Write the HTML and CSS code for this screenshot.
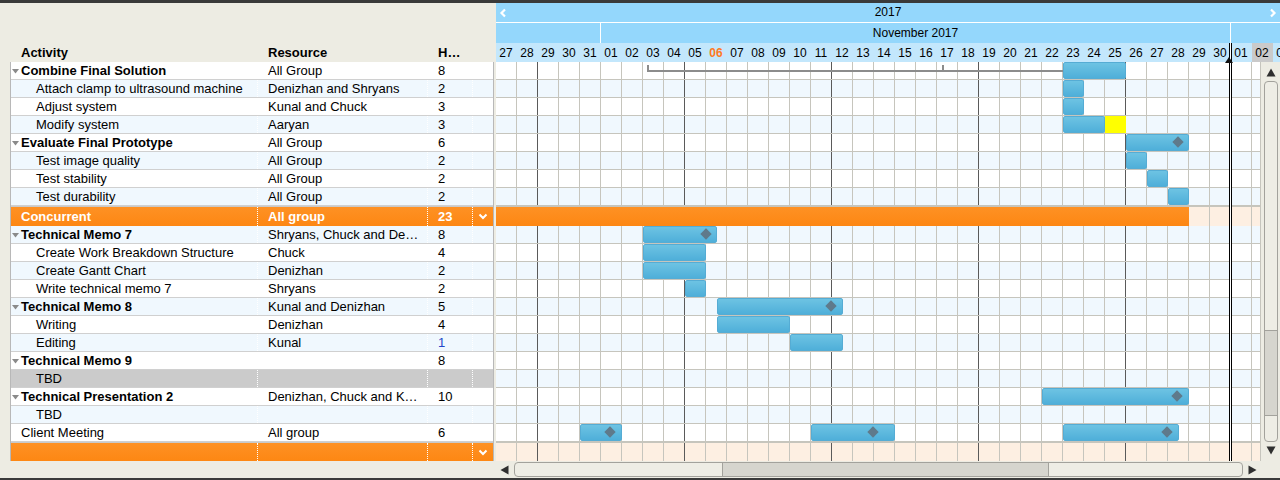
FILE: index.html
```html
<!DOCTYPE html>
<html>
<head>
<meta charset="utf-8">
<link rel="stylesheet" href="styles.css">
</head>
<body>
<div class="topbar"></div>
<div class="main">
  <div class="left">
    <div class="thead">
      <div class="hc c-act">Activity</div>
      <div class="hc c-res">Resource</div>
      <div class="hc c-hrs">H…</div>
    </div>
    <div class="tbody">
      <div class="row w g"><div class="cell c-act"><span class="tri"><svg width="7" height="5" viewBox="0 0 7 5"><polygon points="0,0 7,0 3.5,4.5" fill="#8a8a8a"/></svg></span>Combine Final Solution</div><div class="cell c-res">All Group</div><div class="cell c-hrs">8</div><div class="cell c-dd"></div></div>
      <div class="row b k"><div class="cell c-act">Attach clamp to ultrasound machine</div><div class="cell c-res">Denizhan and Shryans</div><div class="cell c-hrs">2</div><div class="cell c-dd"></div></div>
      <div class="row w k"><div class="cell c-act">Adjust system</div><div class="cell c-res">Kunal and Chuck</div><div class="cell c-hrs">3</div><div class="cell c-dd"></div></div>
      <div class="row b k"><div class="cell c-act">Modify system</div><div class="cell c-res">Aaryan</div><div class="cell c-hrs">3</div><div class="cell c-dd"></div></div>
      <div class="row w g"><div class="cell c-act"><span class="tri"><svg width="7" height="5" viewBox="0 0 7 5"><polygon points="0,0 7,0 3.5,4.5" fill="#8a8a8a"/></svg></span>Evaluate Final Prototype</div><div class="cell c-res">All Group</div><div class="cell c-hrs">6</div><div class="cell c-dd"></div></div>
      <div class="row b k"><div class="cell c-act">Test image quality</div><div class="cell c-res">All Group</div><div class="cell c-hrs">2</div><div class="cell c-dd"></div></div>
      <div class="row w k"><div class="cell c-act">Test stability</div><div class="cell c-res">All Group</div><div class="cell c-hrs">2</div><div class="cell c-dd"></div></div>
      <div class="row b k"><div class="cell c-act">Test durability</div><div class="cell c-res">All Group</div><div class="cell c-hrs">2</div><div class="cell c-dd"></div></div>
      <div class="row o"><div class="cell c-act">Concurrent</div><div class="cell c-res">All group</div><div class="cell c-hrs">23</div><div class="cell c-dd"><svg width="10" height="7" viewBox="0 0 10 7"><polyline points="1.5,1.5 5,5 8.5,1.5" fill="none" stroke="#fff" stroke-width="2"/></svg></div></div>
      <div class="row b g"><div class="cell c-act"><span class="tri"><svg width="7" height="5" viewBox="0 0 7 5"><polygon points="0,0 7,0 3.5,4.5" fill="#8a8a8a"/></svg></span>Technical Memo 7</div><div class="cell c-res">Shryans, Chuck and Denizhan</div><div class="cell c-hrs">8</div><div class="cell c-dd"></div></div>
      <div class="row w k"><div class="cell c-act">Create Work Breakdown Structure</div><div class="cell c-res">Chuck</div><div class="cell c-hrs">4</div><div class="cell c-dd"></div></div>
      <div class="row b k"><div class="cell c-act">Create Gantt Chart</div><div class="cell c-res">Denizhan</div><div class="cell c-hrs">2</div><div class="cell c-dd"></div></div>
      <div class="row w k"><div class="cell c-act">Write technical memo 7</div><div class="cell c-res">Shryans</div><div class="cell c-hrs">2</div><div class="cell c-dd"></div></div>
      <div class="row b g"><div class="cell c-act"><span class="tri"><svg width="7" height="5" viewBox="0 0 7 5"><polygon points="0,0 7,0 3.5,4.5" fill="#8a8a8a"/></svg></span>Technical Memo 8</div><div class="cell c-res">Kunal and Denizhan</div><div class="cell c-hrs">5</div><div class="cell c-dd"></div></div>
      <div class="row w k"><div class="cell c-act">Writing</div><div class="cell c-res">Denizhan</div><div class="cell c-hrs">4</div><div class="cell c-dd"></div></div>
      <div class="row b k"><div class="cell c-act">Editing</div><div class="cell c-res">Kunal</div><div class="cell c-hrs num-blue">1</div><div class="cell c-dd"></div></div>
      <div class="row w g"><div class="cell c-act"><span class="tri"><svg width="7" height="5" viewBox="0 0 7 5"><polygon points="0,0 7,0 3.5,4.5" fill="#8a8a8a"/></svg></span>Technical Memo 9</div><div class="cell c-res"></div><div class="cell c-hrs">8</div><div class="cell c-dd"></div></div>
      <div class="row sel k"><div class="cell c-act">TBD</div><div class="cell c-res"></div><div class="cell c-hrs"></div><div class="cell c-dd"></div></div>
      <div class="row w g"><div class="cell c-act"><span class="tri"><svg width="7" height="5" viewBox="0 0 7 5"><polygon points="0,0 7,0 3.5,4.5" fill="#8a8a8a"/></svg></span>Technical Presentation 2</div><div class="cell c-res">Denizhan, Chuck and Kunal</div><div class="cell c-hrs">10</div><div class="cell c-dd"></div></div>
      <div class="row b k"><div class="cell c-act">TBD</div><div class="cell c-res"></div><div class="cell c-hrs"></div><div class="cell c-dd"></div></div>
      <div class="row w p"><div class="cell c-act">Client Meeting</div><div class="cell c-res">All group</div><div class="cell c-hrs">6</div><div class="cell c-dd"></div></div>
      <div class="row o o2"><div class="cell c-act"></div><div class="cell c-res"></div><div class="cell c-hrs"></div><div class="cell c-dd"><svg width="10" height="7" viewBox="0 0 10 7"><polyline points="1.5,1.5 5,5 8.5,1.5" fill="none" stroke="#fff" stroke-width="2"/></svg></div></div>
    </div>
  </div>

  <div class="gantt">
    <div class="yr">
      <span class="nav"><svg width="8" height="10" viewBox="0 0 8 10"><polyline points="6,1.5 2.5,5 6,8.5" fill="none" stroke="#fff" stroke-width="2.2"/></svg></span>
      <span class="yr-title">2017</span>
      <span class="nav nav-r"><svg width="8" height="10" viewBox="0 0 8 10"><polyline points="2,1.5 5.5,5 2,8.5" fill="none" stroke="#fff" stroke-width="2.2"/></svg></span>
    </div>
    <div class="mo">
      <div class="m-oct"></div>
      <div class="m-nov">November 2017</div>
      <div class="m-dec"></div>
    </div>
    <div class="days">
      <span>27</span><span>28</span><span>29</span><span>30</span><span>31</span><span>01</span><span>02</span><span>03</span><span>04</span><span>05</span><span class="today">06</span><span>07</span><span>08</span><span>09</span><span>10</span><span>11</span><span>12</span><span>13</span><span>14</span><span>15</span><span>16</span><span>17</span><span>18</span><span>19</span><span>20</span><span>21</span><span>22</span><span>23</span><span>24</span><span>25</span><span>26</span><span>27</span><span>28</span><span>29</span><span>30</span><span>01</span><span class="hl">02</span><span>03</span>
    </div>
    <div class="gmid">
      <div class="gbody">
        <div class="grow w"><div class="bracket"><i></i></div><div class="bar" style="left:567px;width:63px"></div></div>
        <div class="grow b"><div class="bar" style="left:567px;width:21px"></div></div>
        <div class="grow w"><div class="bar" style="left:567px;width:21px"></div></div>
        <div class="grow b"><div class="bar" style="left:567px;width:42px"></div><div class="mark" style="left:609px;width:21px"></div></div>
        <div class="grow w"><div class="bar" style="left:630px;width:63px"><span class="dia" style="left:47px"></span></div></div>
        <div class="grow b"><div class="bar" style="left:630px;width:21px"></div></div>
        <div class="grow w"><div class="bar" style="left:651px;width:21px"></div></div>
        <div class="grow b"><div class="bar" style="left:672px;width:21px"></div></div>
        <div class="grow o"><div class="obar" style="left:0;width:693px"></div></div>
        <div class="grow b"><div class="bar" style="left:147px;width:74px"><span class="dia" style="left:58px"></span></div></div>
        <div class="grow w"><div class="bar" style="left:147px;width:63px"></div></div>
        <div class="grow b"><div class="bar" style="left:147px;width:63px"></div></div>
        <div class="grow w"><div class="bar" style="left:189px;width:21px"></div></div>
        <div class="grow b"><div class="bar" style="left:221px;width:126px"><span class="dia" style="left:109px"></span></div></div>
        <div class="grow w"><div class="bar" style="left:221px;width:73px"></div></div>
        <div class="grow b"><div class="bar" style="left:294px;width:53px"></div></div>
        <div class="grow w"></div>
        <div class="grow b"></div>
        <div class="grow w"><div class="bar" style="left:546px;width:147px"><span class="dia" style="left:130px"></span></div></div>
        <div class="grow b"></div>
        <div class="grow w"><div class="bar" style="left:84px;width:42px"><span class="dia" style="left:25px"></span></div><div class="bar" style="left:315px;width:84px"><span class="dia" style="left:57px"></span></div><div class="bar" style="left:567px;width:116px"><span class="dia" style="left:99px"></span></div></div>
        <div class="grow o o2"></div>
      </div>
      <div class="vscroll">
        <div class="varrow"><svg width="10" height="9" viewBox="0 0 10 9"><polygon points="5,0.5 9.5,8.5 0.5,8.5" fill="#2f2f2f"/></svg></div>
        <div class="vtrack"><div class="vthumb"></div></div>
        <div class="varrow down"><svg width="10" height="9" viewBox="0 0 10 9"><polygon points="0.5,0.5 9.5,0.5 5,8.5" fill="#2f2f2f"/></svg></div>
      </div>
    </div>
    <div class="hscroll">
      <div class="harrow"><svg width="9" height="10" viewBox="0 0 9 10"><polygon points="0.5,5 8.5,0.5 8.5,9.5" fill="#2f2f2f"/></svg></div>
      <div class="htrack"><div class="hthumb"></div></div>
      <div class="harrow harrow-r"><svg width="9" height="10" viewBox="0 0 9 10"><polygon points="0.5,0.5 8.5,5 0.5,9.5" fill="#2f2f2f"/></svg></div>
    </div>
    <div class="now"><span class="now-tri"></span></div>
  </div>
</div>
<div class="bottombar"></div>
</body>
</html>
```

FILE: styles.css
```css
* { box-sizing: border-box; margin: 0; padding: 0; }

body {
  width: 1280px;
  height: 480px;
  overflow: hidden;
  background: #edece3;
  font-family: "Liberation Sans", Arial, sans-serif;
  font-size: 13px;
  color: #000;
}

.topbar { height: 3px; background: #3a3a3a; }
.bottombar { height: 2px; background: #3a3a3a; }

.main { display: flex; height: 475px; }

/* ---------- left table ---------- */
.left { width: 496px; padding: 40px 0 0 10px; }

.thead {
  display: flex;
  height: 19px;
  line-height: 19px;
  padding-left: 1px;
  font-weight: bold;
}
.hc { padding-left: 10px; white-space: nowrap; }

.tbody {
  width: 484px;
  border-left: 1px solid #b8b8b8;
  border-right: 1px solid #b8b8b8;
}

.row {
  display: flex;
  height: 18px;
  line-height: 17px;
  border-bottom: 1px solid #d0d0d0;
}
.row.w { background: #fff; }
.row.b { background: #f0f8fe; }
.row.sel { background: #cbcbcb; }

.cell {
  padding-left: 10px;
  white-space: nowrap;
  overflow: hidden;
  text-overflow: ellipsis;
  border-right: 1px dotted #fff;
}
.c-act { width: 247px; }
.c-res { width: 170px; padding-right: 3px; }
.c-hrs { width: 45px; }
.c-dd { width: 20px; border-right: 0; padding-left: 0; display: flex; align-items: center; justify-content: center; }

.row.g .c-act { font-weight: bold; padding-left: 0; }
.row.k .c-act { padding-left: 25px; }

.tri {
  display: inline-block;
  width: 10px;
  padding-left: 1px;
  vertical-align: 1px;
}
.tri svg { display: block; }

.num-blue { color: #2346c8; }

.row.o {
  height: 20px;
  line-height: 19px;
  border-bottom: 0;
  border-top: 1px solid #c9c9c9;
  background: linear-gradient(#fe9124, #fd8713);
  color: #fff;
  font-weight: bold;
}
.row.o2 { height: 19px; line-height: 18px; }

/* ---------- gantt ---------- */
.gantt { width: 784px; position: relative; }

.yr {
  height: 20px;
  border-bottom: 1px solid #fff;
  background: #94d7fc;
  display: flex;
  align-items: center;
  font-size: 12px;
}
.nav { width: 14px; height: 19px; display: flex; align-items: center; padding-left: 3px; }
.nav-r { padding-left: 3px; }
.yr-title { flex: 1; text-align: center; line-height: 19px; }

.mo {
  height: 20px;
  display: flex;
  background: #94d7fc;
  font-size: 12px;
  line-height: 20px;
}
.m-oct { width: 105px; border-right: 1px solid #fff; }
.m-nov { width: 630px; border-right: 1px solid #fff; text-align: center; }
.m-dec { flex: 1; }

.days {
  height: 19px;
  display: flex;
  overflow: hidden;
  background: #c3e7fc;
  font-size: 12px;
  line-height: 20px;
}
.days span { flex: 0 0 21px; text-align: center; padding-right: 1px; }
.days .today { color: #ff7a1f; font-weight: bold; }
.days .hl { background: #cacaca; }

.gmid { display: flex; height: 399px; }

.gbody {
  width: 765px;
  border-right: 1px solid #c6c5bd;
}

.grow {
  position: relative;
  height: 18px;
  border-bottom: 1px solid #c6c5bd;
  background-image:
    linear-gradient(to right, transparent 146px, #5a5a5a 146px),
    linear-gradient(to right, transparent 20px, #c6c5bd 20px);
  background-size: 147px 100%, 21px 100%;
  background-position: 42px 0, 0 0;
}
.grow.w { background-color: #fff; }
.grow.b { background-color: #f0f8fe; }
.grow.o {
  height: 20px;
  border-bottom: 0;
  border-top: 1px solid #c6c5bd;
  background-color: #fdefe2;
}
.grow.o2 { height: 19px; }

.bar {
  position: absolute;
  top: 0;
  height: 17px;
  border: 1px solid #55acd4;
  border-radius: 2px;
  background: linear-gradient(#6dc3e3, #4fafd9);
}
.mark { position: absolute; top: 0; height: 17px; background: #ffff00; }
.obar {
  position: absolute;
  top: 0;
  height: 19px;
  background: linear-gradient(#fe9124, #fd8713);
}
.dia {
  position: absolute;
  top: 3px;
  width: 8px;
  height: 8px;
  background: #5f7a8b;
  transform: rotate(45deg);
}

.bracket {
  position: absolute;
  left: 151px;
  top: 3px;
  width: 416px;
  height: 7px;
  border-left: 2px solid #8c8c8c;
  border-bottom: 2px solid #8c8c8c;
}
.bracket i {
  position: absolute;
  left: 293px;
  top: 0;
  width: 2px;
  height: 5px;
  background: #8c8c8c;
}

.vscroll { width: 19px; display: flex; flex-direction: column; }
.varrow { height: 19px; display: flex; align-items: center; padding-left: 5px; padding-top: 1px; }
.varrow.down { padding-top: 0; padding-bottom: 2px; }
.vtrack {
  height: 361px;
  width: 14px;
  margin-left: 3px;
  border: 1px solid #a3a29c;
  border-radius: 4px;
  background: #eeede5;
  padding-top: 248px;
}
.vthumb {
  height: 86px;
  border-top: 1px solid #a3a29c;
  border-bottom: 1px solid #a3a29c;
  background: #d6d5ce;
}

.hscroll { height: 17px; display: flex; align-items: center; }
.harrow { width: 18px; height: 17px; display: flex; align-items: center; padding-left: 4px; }
.harrow-r { padding-left: 5px; width: 19px; }
.htrack {
  width: 729px;
  height: 15px;
  border: 1px solid #a3a29c;
  border-radius: 4px;
  background: #eeede5;
  padding-left: 207px;
  display: flex;
}
.hthumb {
  width: 327px;
  border-left: 1px solid #a3a29c;
  border-right: 1px solid #a3a29c;
  background: #d6d5ce;
}

.now {
  position: absolute;
  left: 733px;
  top: 40px;
  width: 3px;
  height: 418px;
  border-left: 1px solid #000;
  border-right: 1px solid #000;
  background: #fff;
}
.now-tri {
  position: absolute;
  left: -5px;
  top: 14px;
  width: 0;
  height: 0;
  border-left: 4px solid transparent;
  border-right: 4px solid transparent;
  border-bottom: 6px solid #111;
}
```
